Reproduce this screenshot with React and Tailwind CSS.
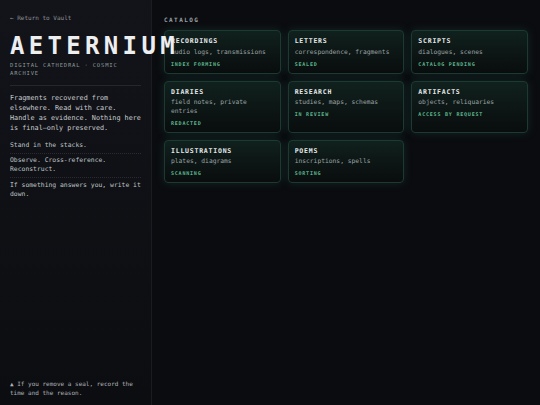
import React from "react";

const cards = [
  { title: "RECORDINGS", sub: "audio logs, transmissions", status: "INDEX FORMING" },
  { title: "LETTERS", sub: "correspondence, fragments", status: "SEALED" },
  { title: "SCRIPTS", sub: "dialogues, scenes", status: "CATALOG PENDING" },
  { title: "DIARIES", sub: "field notes, private entries", status: "REDACTED" },
  { title: "RESEARCH", sub: "studies, maps, schemas", status: "IN REVIEW" },
  { title: "ARTIFACTS", sub: "objects, reliquaries", status: "ACCESS BY REQUEST" },
  { title: "ILLUSTRATIONS", sub: "plates, diagrams", status: "SCANNING" },
  { title: "POEMS", sub: "inscriptions, spells", status: "SORTING" },
];

function Card({ title, sub, status }) {
  return (
    <div className="rounded-[4px] border border-[#1d3a32] bg-gradient-to-b from-[#10211d] to-[#090d0d] px-[6px] pt-[6px] pb-[5px] shadow-[0_0_10px_rgba(40,130,100,0.22)]">
      <div className="text-[6.5px] leading-[8px] font-bold tracking-[0.12em] text-[#e6e9ea]">
        {title}
      </div>
      <div className="mt-[2.5px] text-[6.3px] leading-[8.5px] text-[#9ba1a4]">{sub}</div>
      <div className="mt-[4.5px] text-[5px] leading-[7px] font-bold tracking-[0.16em] text-[#5db58c]">
        {status}
      </div>
    </div>
  );
}

export default function App() {
  return (
    <div className="flex h-[405px] w-[540px] overflow-hidden bg-[#0b0c10] font-['DejaVu_Sans_Mono',monospace]">
      {/* sidebar */}
      <aside className="relative z-10 flex w-[152px] shrink-0 flex-col border-r border-[#1b1c22] bg-gradient-to-b from-[#131419] to-[#0c0d11] px-[10px] pt-[14px] pb-[8px]">
        <div className="text-[6px] leading-[8px] text-[#8d9296]">← Return to Vault</div>
        <h1 className="mt-[12px] whitespace-nowrap text-[24px] leading-[24px] font-bold tracking-[0.18em] text-[#eceef0]">
          AETERNIUM
        </h1>
        <div className="mt-[3px] text-[5.5px] leading-[8px] tracking-[0.15em] text-[#8b9a9c]">
          DIGITAL CATHEDRAL · COSMIC ARCHIVE
        </div>
        <div className="mt-[8px] border-b border-[#26272d]" />
        <p className="mt-[7px] text-[6.8px] leading-[10px] text-[#c9ccd0]">
          Fragments recovered from elsewhere. Read with care. Handle as evidence. Nothing here
          is final—only preserved.
        </p>
        <ul className="mt-[8px] divide-y divide-dotted divide-[#2a2b31] text-[6.4px] leading-[9px] text-[#bfc3c7]">
          <li className="pb-[2.5px]">Stand in the stacks.</li>
          <li className="py-[2.5px]">Observe. Cross-reference. Reconstruct.</li>
          <li className="pt-[3px]">If something answers you, write it down.</li>
        </ul>
        <div className="mt-auto text-[6px] leading-[9px] text-[#aeb2b6]">
          ▲ If you remove a seal, record the time and the reason.
        </div>
      </aside>

      {/* catalog */}
      <main className="flex-1 px-[12px] pt-[16px]">
        <div className="text-[6px] leading-[8px] font-bold tracking-[0.24em] text-[#9aa0a6]">CATALOG</div>
        <div className="mt-[6px] grid grid-cols-3 gap-[7px]">
          {cards.map((c) => (
            <Card key={c.title} {...c} />
          ))}
        </div>
      </main>
    </div>
  );
}
